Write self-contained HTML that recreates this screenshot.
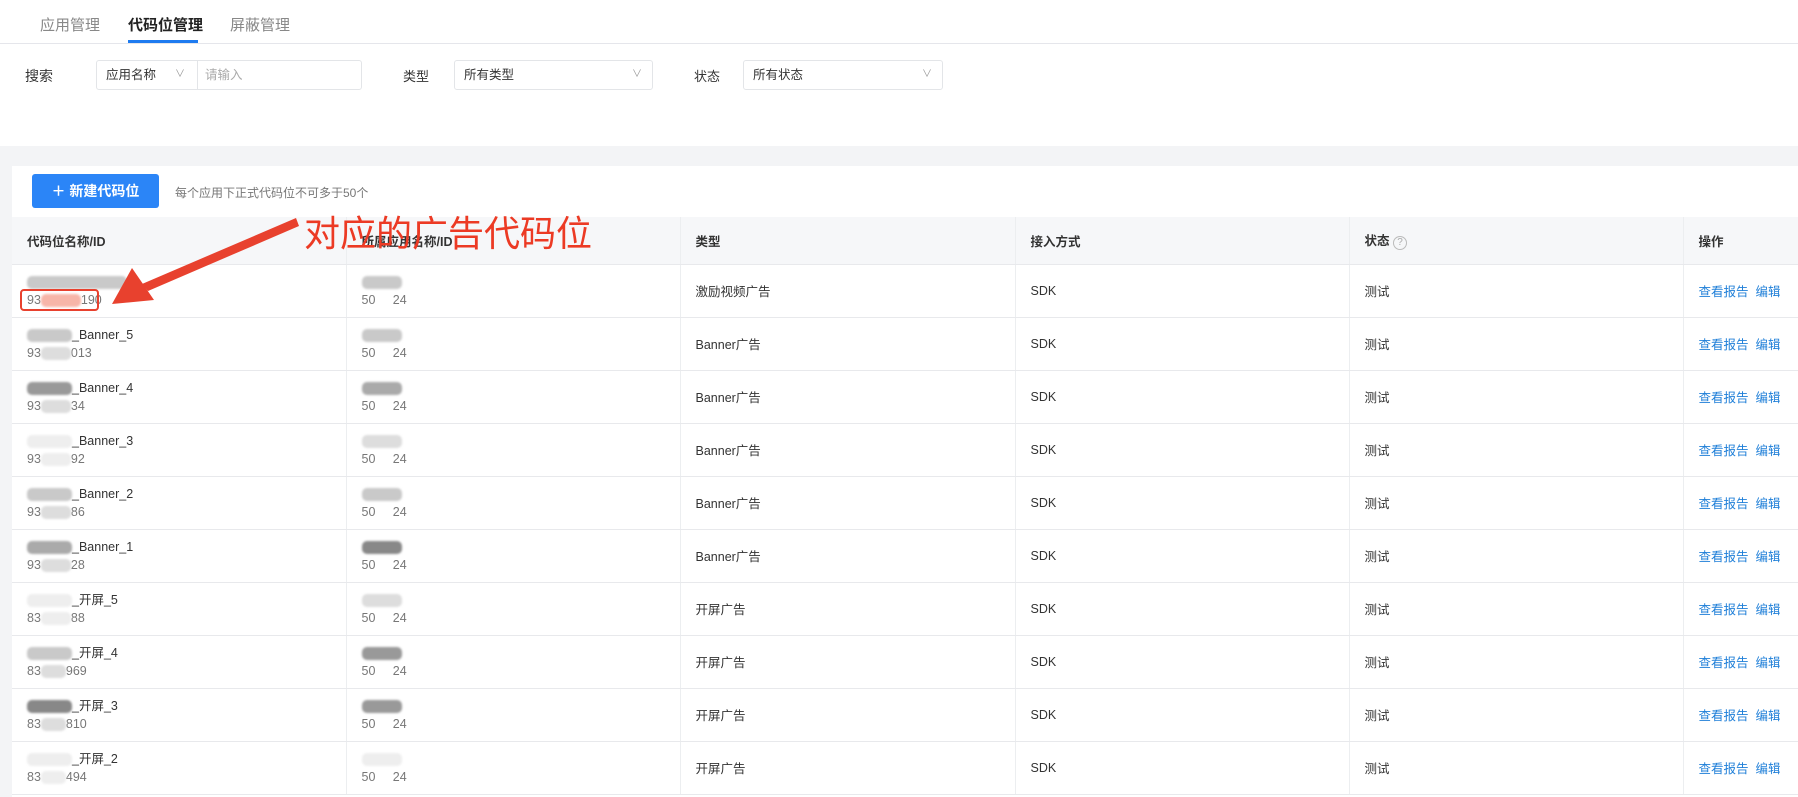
<!DOCTYPE html>
<html><head><meta charset="utf-8">
<style>
*{margin:0;padding:0;box-sizing:border-box}
body{width:1798px;height:797px;overflow:hidden;background:#f3f4f6;font-family:"Liberation Sans","Noto Sans CJK SC",sans-serif;color:#333;position:relative}
.top{position:absolute;left:0;top:0;width:1798px;height:146px;background:#fff}
.tabs{position:absolute;left:0;top:0;width:1798px;height:44px;border-bottom:1px solid #e5e6eb}
.tab{position:absolute;top:14px;font-size:15px;color:#888}
.tab.on{color:#222;font-weight:bold}
.ul{position:absolute;left:128px;top:40px;width:70px;height:3px;background:#1e7bf0}
.lbl{position:absolute;top:66px;font-size:14px;color:#333}
.sel{position:absolute;top:60px;height:30px;border:1px solid #e3e5e8;border-radius:3px;font-size:12.5px;color:#333;line-height:28px;padding-left:9px}
.sel .ar{position:absolute;right:10px;top:0;color:#999;font-size:10px}
.panel{position:absolute;left:12px;top:166px;width:1786px;height:631px;background:#fff}
.btn{position:absolute;left:32px;top:174px;width:127px;height:34px;background:#2b85f7;border-radius:3px;color:#fff;font-size:14px;font-weight:bold;line-height:34px;text-align:center}
.hint{position:absolute;left:175px;top:184px;font-size:12px;color:#777}
table{position:absolute;left:12px;top:217px;border-collapse:collapse;table-layout:fixed;width:1800px}
th,td{border-bottom:1px solid #e8e9ec;border-right:1px solid #eceef0;text-align:left;font-size:12.5px;padding-left:15px;vertical-align:middle}
th{height:47px;background:#f6f7f9;font-weight:bold;color:#333}
td{height:53px;color:#333}
td.n{line-height:18px}
td.n .id{color:#777}
.blob{display:inline-block;background:#c9c9c9;height:13px;vertical-align:middle;border-radius:5px;filter:blur(1px)}
.lk{color:#1f7fd8}
.note{position:absolute;left:304px;top:205px;font-size:36px;color:#ec3a24;font-family:"Noto Sans CJK SC",sans-serif;font-weight:normal}
.box{position:absolute;left:20px;top:289px;width:79px;height:22px;border:2px solid #e8412e;border-radius:4px}
</style></head><body>
<div class="top">
 <div class="tabs">
  <span class="tab" style="left:40px">应用管理</span>
  <span class="tab on" style="left:128px">代码位管理</span>
  <span class="tab" style="left:230px">屏蔽管理</span>
  <div class="ul"></div>
 </div>
 <span class="lbl" style="left:25px">搜索</span>
 <div class="sel" style="left:96px;width:266px">应用名称<span style="position:absolute;left:78px;color:#999;font-size:10px">∨</span><span style="position:absolute;left:100px;top:0;height:28px;border-left:1px solid #e3e5e8;padding-left:7px;color:#aaa">请输入</span></div>
 <span class="lbl" style="left:403px;font-size:13px">类型</span>
 <div class="sel" style="left:454px;width:199px">所有类型<span class="ar">∨</span></div>
 <span class="lbl" style="left:694px;font-size:13px">状态</span>
 <div class="sel" style="left:743px;width:200px">所有状态<span class="ar">∨</span></div>
</div>
<div class="panel"></div>
<div class="btn">＋ 新建代码位</div>
<div class="hint">每个应用下正式代码位不可多于50个</div>
<table>
<colgroup><col style="width:334px"><col style="width:334px"><col style="width:335px"><col style="width:334px"><col style="width:334px"><col style="width:129px"></colgroup>
<tr><th>代码位名称/ID</th><th>所属应用名称/ID</th><th>类型</th><th>接入方式</th><th>状态 <span style="display:inline-block;width:14px;height:14px;border:1px solid #bbb;border-radius:50%;font-size:10px;line-height:12px;text-align:center;color:#aaa;font-weight:normal">?</span></th><th>操作</th></tr>
<tr><td class="n"><span class="blob" style="width:100px"></span><br><span class="id">93<span class="blob" style="width:40px;background:#f7b5a8"></span>190</span></td><td class="n"><span class="blob" style="width:40px"></span><br><span class="id">50&nbsp;&nbsp;&nbsp;&nbsp;&nbsp;24</span></td><td>激励视频广告</td><td>SDK</td><td>测试</td><td><span class="lk">查看报告</span>&nbsp;&nbsp;<span class="lk">编辑</span></td></tr>
<tr><td class="n"><span class="blob" style="width:45px"></span>_Banner_5<br><span class="id">93<span class="blob" style="width:30px;background:#ddd"></span>013</span></td><td class="n"><span class="blob" style="width:40px"></span><br><span class="id">50&nbsp;&nbsp;&nbsp;&nbsp;&nbsp;24</span></td><td>Banner广告</td><td>SDK</td><td>测试</td><td><span class="lk">查看报告</span>&nbsp;&nbsp;<span class="lk">编辑</span></td></tr>
<tr><td class="n"><span class="blob" style="width:45px;background:#999"></span>_Banner_4<br><span class="id">93<span class="blob" style="width:30px;background:#ddd"></span>34</span></td><td class="n"><span class="blob" style="width:40px;background:#aaa"></span><br><span class="id">50&nbsp;&nbsp;&nbsp;&nbsp;&nbsp;24</span></td><td>Banner广告</td><td>SDK</td><td>测试</td><td><span class="lk">查看报告</span>&nbsp;&nbsp;<span class="lk">编辑</span></td></tr>
<tr><td class="n"><span class="blob" style="width:45px;background:#eee"></span>_Banner_3<br><span class="id">93<span class="blob" style="width:30px;background:#eee"></span>92</span></td><td class="n"><span class="blob" style="width:40px;background:#ddd"></span><br><span class="id">50&nbsp;&nbsp;&nbsp;&nbsp;&nbsp;24</span></td><td>Banner广告</td><td>SDK</td><td>测试</td><td><span class="lk">查看报告</span>&nbsp;&nbsp;<span class="lk">编辑</span></td></tr>
<tr><td class="n"><span class="blob" style="width:45px"></span>_Banner_2<br><span class="id">93<span class="blob" style="width:30px;background:#ddd"></span>86</span></td><td class="n"><span class="blob" style="width:40px"></span><br><span class="id">50&nbsp;&nbsp;&nbsp;&nbsp;&nbsp;24</span></td><td>Banner广告</td><td>SDK</td><td>测试</td><td><span class="lk">查看报告</span>&nbsp;&nbsp;<span class="lk">编辑</span></td></tr>
<tr><td class="n"><span class="blob" style="width:45px;background:#aaa"></span>_Banner_1<br><span class="id">93<span class="blob" style="width:30px;background:#ddd"></span>28</span></td><td class="n"><span class="blob" style="width:40px;background:#888"></span><br><span class="id">50&nbsp;&nbsp;&nbsp;&nbsp;&nbsp;24</span></td><td>Banner广告</td><td>SDK</td><td>测试</td><td><span class="lk">查看报告</span>&nbsp;&nbsp;<span class="lk">编辑</span></td></tr>
<tr><td class="n"><span class="blob" style="width:45px;background:#eee"></span>_开屏_5<br><span class="id">83<span class="blob" style="width:30px;background:#eee"></span>88</span></td><td class="n"><span class="blob" style="width:40px;background:#ddd"></span><br><span class="id">50&nbsp;&nbsp;&nbsp;&nbsp;&nbsp;24</span></td><td>开屏广告</td><td>SDK</td><td>测试</td><td><span class="lk">查看报告</span>&nbsp;&nbsp;<span class="lk">编辑</span></td></tr>
<tr><td class="n"><span class="blob" style="width:45px"></span>_开屏_4<br><span class="id">83<span class="blob" style="width:25px;background:#ddd"></span>969</span></td><td class="n"><span class="blob" style="width:40px;background:#999"></span><br><span class="id">50&nbsp;&nbsp;&nbsp;&nbsp;&nbsp;24</span></td><td>开屏广告</td><td>SDK</td><td>测试</td><td><span class="lk">查看报告</span>&nbsp;&nbsp;<span class="lk">编辑</span></td></tr>
<tr><td class="n"><span class="blob" style="width:45px;background:#888"></span>_开屏_3<br><span class="id">83<span class="blob" style="width:25px;background:#ddd"></span>810</span></td><td class="n"><span class="blob" style="width:40px;background:#999"></span><br><span class="id">50&nbsp;&nbsp;&nbsp;&nbsp;&nbsp;24</span></td><td>开屏广告</td><td>SDK</td><td>测试</td><td><span class="lk">查看报告</span>&nbsp;&nbsp;<span class="lk">编辑</span></td></tr>
<tr><td class="n"><span class="blob" style="width:45px;background:#eee"></span>_开屏_2<br><span class="id">83<span class="blob" style="width:25px;background:#eee"></span>494</span></td><td class="n"><span class="blob" style="width:40px;background:#eee"></span><br><span class="id">50&nbsp;&nbsp;&nbsp;&nbsp;&nbsp;24</span></td><td>开屏广告</td><td>SDK</td><td>测试</td><td><span class="lk">查看报告</span>&nbsp;&nbsp;<span class="lk">编辑</span></td></tr>
</table>
<div class="note">对应的广告代码位</div>
<div class="box"></div>
<svg style="position:absolute;left:0;top:0" width="1798" height="797">
<polygon points="296,218 299,226 148,291 142,284" fill="#e8412e"/>
<polygon points="112,304 132,268 154,300" fill="#e8412e"/>
</svg>
</body></html>
